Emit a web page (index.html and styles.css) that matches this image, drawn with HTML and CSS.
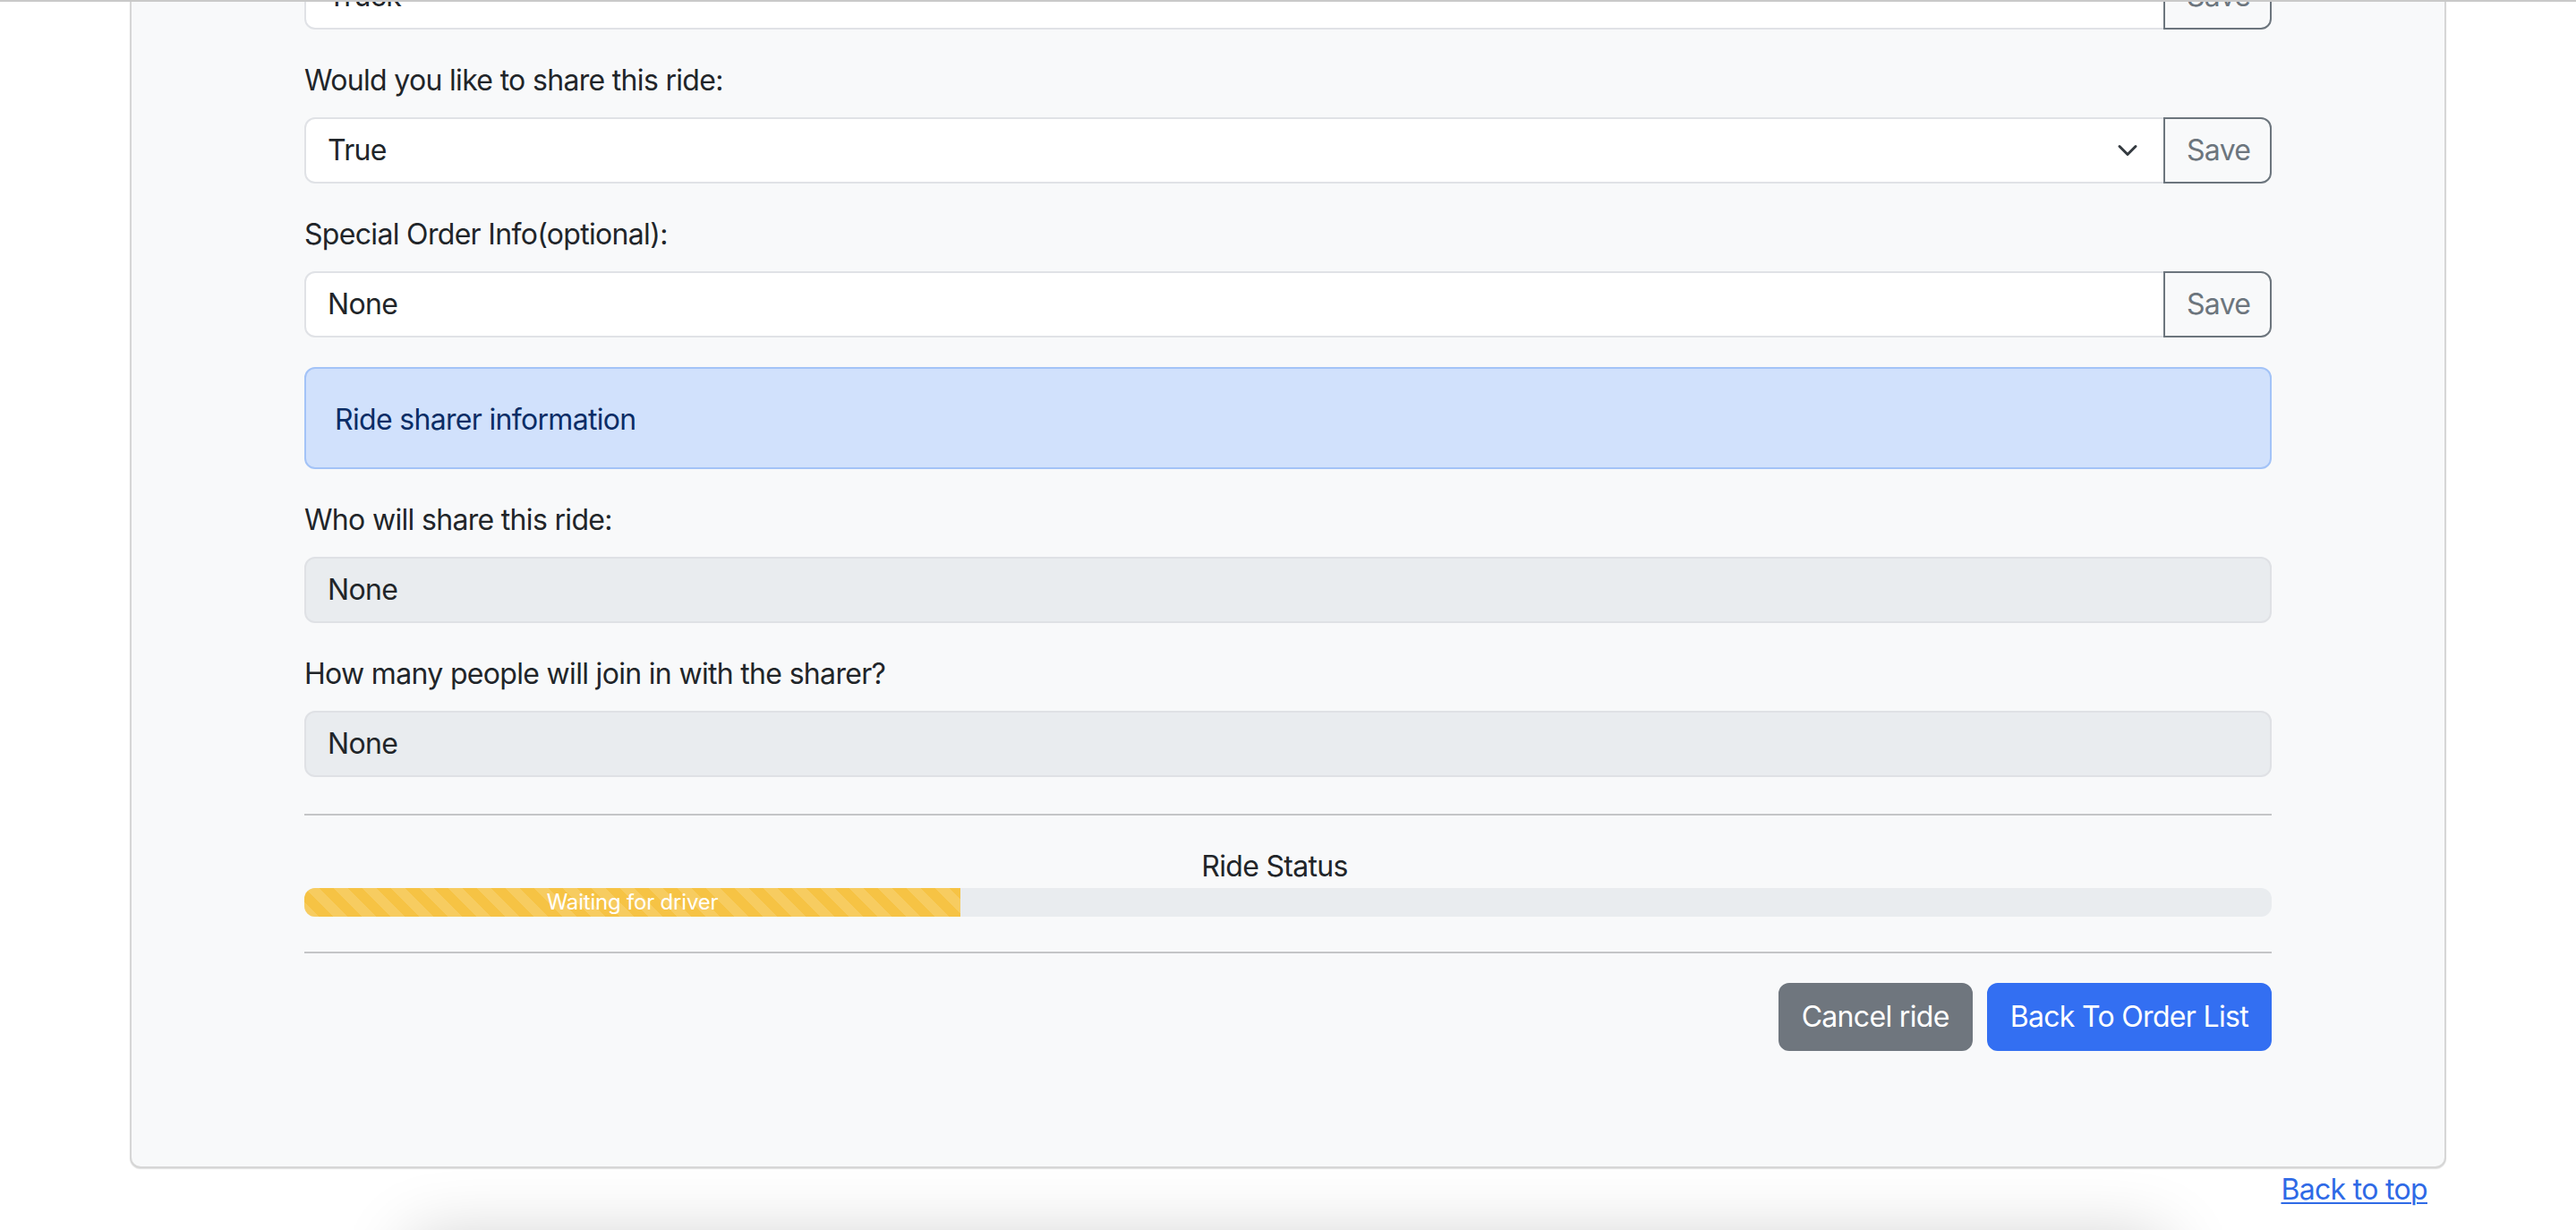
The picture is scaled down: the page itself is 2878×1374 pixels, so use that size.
FILE: index.html
```html
<!DOCTYPE html>
<html lang="en">
<head>
<meta charset="utf-8">
<title>Ride detail</title>
<link rel="stylesheet" href="styles.css">
</head>
<body>
<div class="topline"></div>
<main class="page">
  <section class="card">
    <div class="card-body">
      <div class="input-group">
        <div class="form-control">Truck</div>
        <button class="btn-save" type="button">Save</button>
      </div>

      <label class="form-label">Would you like to share this ride:</label>
      <div class="input-group">
        <div class="form-control form-select">
          <span class="select-value">True</span>
          <svg class="chevron" viewBox="0 0 16 16" width="24" height="24" aria-hidden="true"><path d="m2 5 6 6 6-6" fill="none" stroke="#343a40" stroke-width="2" stroke-linecap="round" stroke-linejoin="round"/></svg>
        </div>
        <button class="btn-save" type="button">Save</button>
      </div>

      <label class="form-label">Special Order Info(optional):</label>
      <div class="input-group">
        <div class="form-control">None</div>
        <button class="btn-save" type="button">Save</button>
      </div>

      <div class="alert">Ride sharer information</div>

      <label class="form-label">Who will share this ride:</label>
      <div class="form-control is-disabled block">None</div>

      <label class="form-label">How many people will join in with the sharer?</label>
      <div class="form-control is-disabled block last">None</div>

      <hr class="divider">

      <div class="status-title">Ride Status</div>
      <div class="progress">
        <div class="progress-bar" style="width:33.35%">Waiting for driver</div>
      </div>

      <hr class="divider second">

      <div class="actions">
        <button class="btn btn-secondary" type="button">Cancel ride</button>
        <button class="btn btn-primary" type="button">Back To Order List</button>
      </div>
    </div>
  </section>
  <div class="back-top"><a href="#">Back to top</a></div>
  <div class="page-shadow"></div>
</main>
</body>
</html>
```

FILE: styles.css
```css
* { box-sizing: border-box; }

html, body {
  margin: 0;
  padding: 0;
}

body {
  height: 1374px;
  overflow: hidden;
  background: #ffffff;
  color: #212529;
  font-family: Inter, "Noto Sans", "Liberation Sans", sans-serif;
  font-size: 32px;
  line-height: 48px;
  letter-spacing: -0.68px;
}

.topline {
  position: fixed;
  top: 0;
  left: 0;
  right: 0;
  height: 2px;
  background: #c9c9c9;
  z-index: 10;
}

.page {
  margin-top: -43px;
}

.card {
  margin: 0 145px;
  background: #f8f9fa;
  border: 2px solid #d6d6d6;
  border-radius: 12px;
  box-shadow: 0 1px 1px rgba(0, 0, 0, 0.12);
}

.card-body {
  padding: 0 193px 129px;
}

.input-group {
  display: flex;
  height: 74px;
  margin-bottom: 33px;
}

.form-control {
  display: flex;
  align-items: center;
  height: 74px;
  padding: 0 24px;
  background: #ffffff;
  border: 2px solid #e0e2e6;
  border-radius: 12px;
  color: #212529;
}

.input-group .form-control {
  flex: 1;
  border-radius: 12px 0 0 12px;
}

.form-select {
  padding-right: 28px;
}

.select-value { flex: 1; }

.chevron {
  display: block;
  flex: none;
}

.btn-save {
  flex: none;
  width: 121px;
  height: 74px;
  margin-left: -2px;
  padding: 0 24px;
  background: transparent;
  border: 2px solid #6c757d;
  border-radius: 0 12px 12px 0;
  color: #6c757d;
  font-family: inherit;
  font-size: 32px;
  line-height: 48px;
  letter-spacing: -0.68px;
}

.form-label {
  display: block;
  margin-bottom: 17px;
}

.is-disabled {
  background: #e9ecef;
  border-color: #dfe1e5;
}

.block { margin-bottom: 33px; }
.block.last { margin-bottom: 0; }

.alert {
  padding: 33px 32px 29px;
  margin-bottom: 33px;
  background: #d1e1fc;
  border: 2px solid #a3c3f7;
  border-radius: 12px;
  color: #0b2d66;
}

.divider {
  margin: 41px 0 33px;
  border: 0;
  border-top: 2px solid #c4c5c7;
  height: 0;
}

.divider.second {
  margin-top: 39px;
  margin-bottom: 33px;
}

.status-title {
  text-align: center;
  padding-right: 30px;
}

.progress {
  display: flex;
  height: 32px;
  background: #e9ecef;
  border-radius: 12px;
  overflow: hidden;
}

.progress-bar {
  display: flex;
  align-items: center;
  justify-content: center;
  height: 32px;
  background-color: #f6c344;
  background-image: linear-gradient(45deg,
    rgba(255, 255, 255, 0.15) 25%, transparent 25%,
    transparent 50%, rgba(255, 255, 255, 0.15) 50%,
    rgba(255, 255, 255, 0.15) 75%, transparent 75%, transparent);
  background-size: 32px 32px;
  color: #ffffff;
  font-size: 24px;
  line-height: 32px;
  letter-spacing: -0.2px;
  white-space: nowrap;
}

.actions {
  display: flex;
  justify-content: flex-end;
  gap: 16px;
}

.btn {
  height: 76px;
  padding: 0 24px;
  border: 2px solid transparent;
  border-radius: 12px;
  color: #ffffff;
  font-family: inherit;
  font-size: 32px;
  line-height: 48px;
  letter-spacing: -0.68px;
}

.btn-secondary {
  background: #6f767e;
  border-color: #6f767e;
}

.btn-primary {
  background: #336ff2;
  border-color: #336ff2;
}

.back-top {
  display: flex;
  justify-content: flex-end;
  padding-right: 166px;
  padding-top: 0;
}

.back-top a {
  color: #2f6ae6;
  text-decoration: underline;
  text-decoration-thickness: 2px;
  text-underline-offset: 3px;
}

.page-shadow {
  width: 1960px;
  height: 120px;
  margin: 31px auto 0;
  background: #ffffff;
  box-shadow: 0 0 80px rgba(0, 0, 0, 0.2);
}
```
